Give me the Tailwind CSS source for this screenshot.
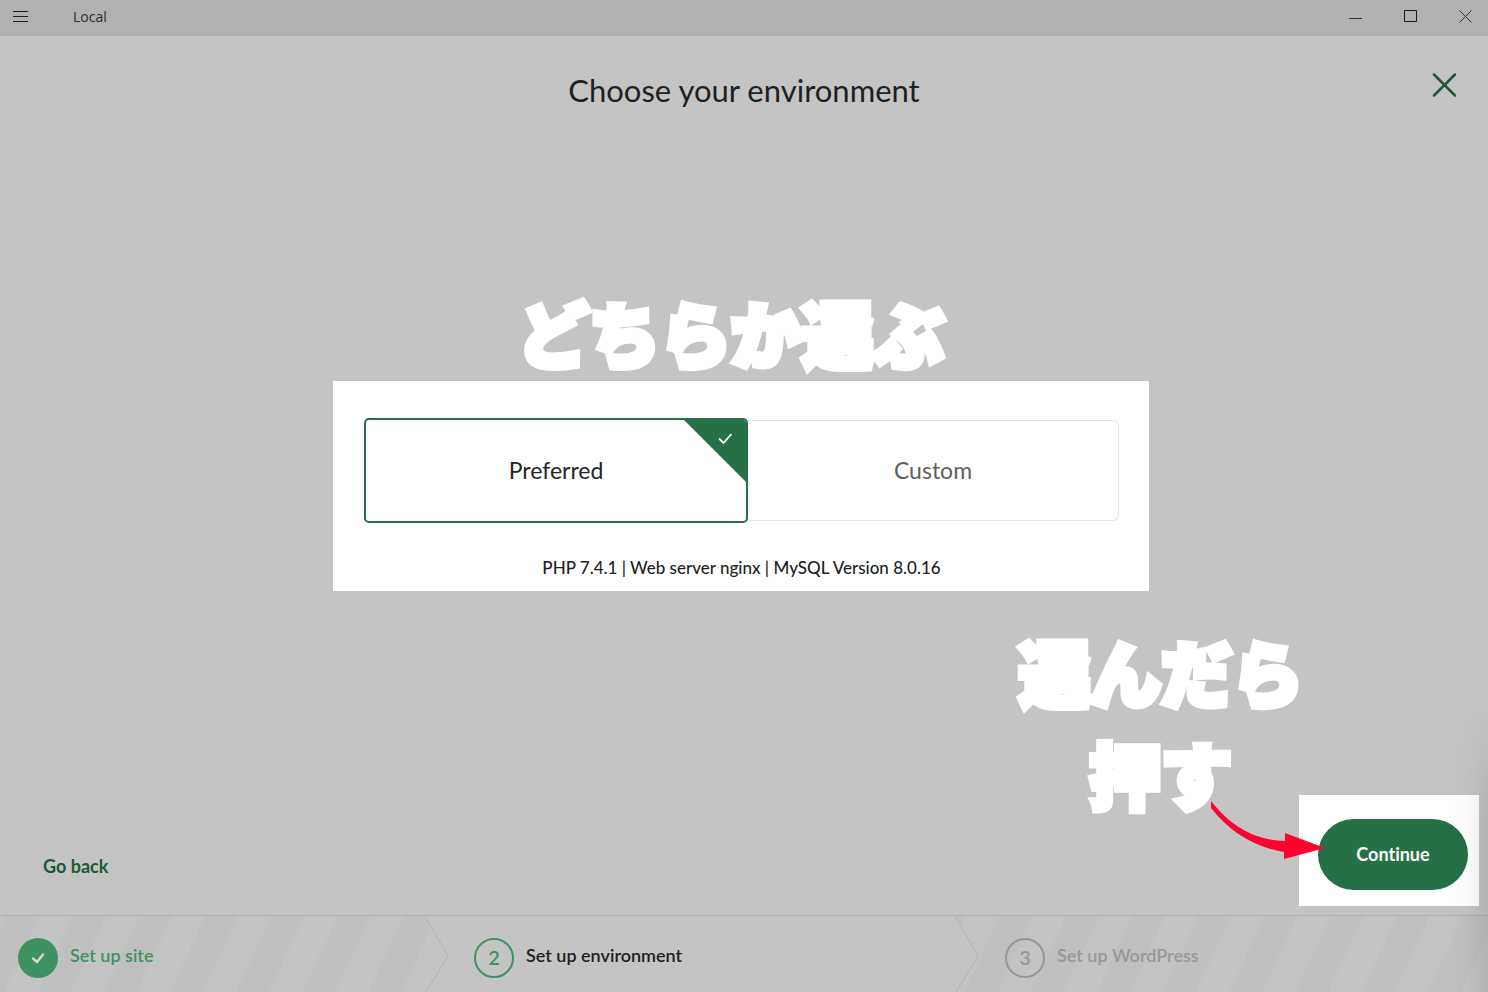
<!DOCTYPE html>
<html lang="ja">
<head>
  <meta charset="UTF-8" />
  <meta name="viewport" content="width=device-width, initial-scale=1" />
  <title>Local - Choose your environment</title>
  <script src="https://cdn.jsdelivr.net/npm/@tailwindcss/browser@4"></script>
</head>
<body class="relative min-h-screen flex flex-col bg-[#c4c4c4] text-[#1f1f1f] font-['Lato','Noto_Sans_CJK_JP',sans-serif] [font-variant-ligatures:none]">
  <!-- Title bar -->
  <header class="h-9 bg-[#b1b1b1] flex items-center justify-between pl-3 pr-[15px]">
    <div class="flex items-center gap-[45px] pb-[2px]">
      <button aria-label="Menu">
        <svg class="w-4 h-4" viewBox="0 0 16 16" fill="none" stroke="#1c1c1c" shape-rendering="crispEdges"><path d="M1 2.500h15M1 7.500h15M1 12.500h15" /></svg>
      </button>
      <span class="text-sm leading-4 text-[#2c2c2c] font-['Open_Sans',sans-serif]">Local</span>
    </div>
    <div class="flex items-center gap-10 pb-1">
      <button aria-label="Minimize">
        <svg class="w-[15px] h-[15px]" viewBox="0 0 15 15" fill="none" stroke="#333"><path d="M1 9.500h13" /></svg>
      </button>
      <button aria-label="Maximize">
        <svg class="w-[15px] h-[15px]" viewBox="0 0 15 15" fill="none" stroke="#1c1c1c"><path d="M1.500 1.500h12v11h-12z" /></svg>
      </button>
      <button aria-label="Close window">
        <svg class="w-[15px] h-[15px]" viewBox="0 0 15 15" fill="none" stroke="#333"><path d="M1.500 1.500l12 12M13.500 1.500l-12 12" /></svg>
      </button>
    </div>
  </header>

  <main class="flex-1 flex flex-col">
    <div class="grid grid-cols-[1fr_auto_1fr] items-start px-8 pt-[34px]">
      <h1 class="col-start-2 text-[31px] leading-10">Choose your environment</h1>
      <button class="justify-self-end" aria-label="Close">
        <svg class="w-6 h-7" viewBox="0 0 24 28" fill="none" stroke="#1c5a37" stroke-width="2.500" stroke-linecap="round"><path d="M2 4.500l21 21M23 4.500L2 25.500" /></svg>
      </button>
    </div>

    <!-- Environment choice -->
    <div class="mt-[179px] pr-[6px]">
      <p class="pr-5 text-center text-[71px] leading-[84px] font-black text-white font-['Noto_Sans_CJK_JP',sans-serif] [-webkit-text-stroke:7px_white]">どちらか選ぶ</p>
      <section class="w-full max-w-[816px] mx-auto mt-2 bg-white pl-[31px] pr-[30px] pt-[37px] pb-[11px] text-center">
        <form class="flex items-center">
          <label class="relative flex-1 h-[105px] flex items-center justify-center rounded-[5px] border-2 border-[#267048] overflow-hidden text-[23px] text-[#262626]">
            <input type="radio" name="environment" class="sr-only" checked />
            Preferred
            <svg class="absolute top-0 right-0 w-[62px] h-[62px]" viewBox="0 0 62 62" fill="none"><path d="M0 0h62v62z" fill="#267048" /><path d="M35 18.500l4.500 4.500 8-9" stroke="#fff" stroke-width="1.800" /></svg>
          </label>
          <label class="w-[371px] h-[101px] flex items-center justify-center rounded-r-md border border-l-0 border-[#e4e4e4] text-[23px] text-[#5f5f5f]">
            <input type="radio" name="environment" class="sr-only" />
            Custom
          </label>
        </form>
        <p class="mt-[33px] text-[17px] leading-6 font-medium">PHP 7.4.1 | Web server nginx | MySQL Version 8.0.16</p>
      </section>
    </div>

    <!-- Actions -->
    <div class="mt-auto flex items-center justify-between pl-[43px] pr-[9px] pb-[9px]">
      <a href="#" class="mt-[30px] text-lg font-bold text-[#1c5a37]">Go back</a>
      <div class="relative bg-white pl-[19px] pr-[11px] pt-6 pb-4">
        <button class="block w-[150px] h-[71px] pb-[2px] rounded-full bg-[#267048] text-lg font-bold text-white">Continue</button>
        <svg class="absolute top-0 -left-[89px] w-[120px] h-[70px]" viewBox="1210 795 120 70"><path d="M1211 801C1233 829 1257 840 1285 841L1285 833L1325 848L1284 859L1284 852C1254 847 1230 832 1211 808Z" fill="#ff0330" /></svg>
        <p class="absolute -top-44 right-44 whitespace-nowrap text-center text-[71px] leading-[102px] font-black text-white font-['Noto_Sans_CJK_JP',sans-serif] [-webkit-text-stroke:7px_white]">選んだら<br />押す</p>
      </div>
    </div>
  </main>

  <!-- Steps -->
  <footer class="h-[77px] border-t border-[#adadad] bg-[repeating-linear-gradient(115deg,#c4c4c4_0px,#c4c4c4_6px,#c0c0c0_6px,#c0c0c0_36px,#c4c4c4_36px,#c4c4c4_60px)]">
    <ol class="h-full grid grid-cols-[425fr_554fr_509fr] text-lg font-semibold">
      <li class="flex items-center gap-3 pl-[18px] pt-2 text-[#3e9160]">
        <svg class="w-10 h-10" viewBox="0 0 40 40" fill="none"><circle cx="20" cy="20" r="20" fill="#3e9160" /><path d="M15 20.500l4 3.500 6-7.500" stroke="#d0d8d3" stroke-width="2.500" stroke-linecap="round" stroke-linejoin="round" /></svg>
        <span class="pb-[6px]">Set up site</span>
      </li>
      <li class="flex">
        <svg class="w-6 h-full" viewBox="0 0 24 76" fill="none" preserveAspectRatio="none"><path d="M0 0h24v76H1l23-36z" fill="#c4c4c4" /><path d="M0 0l23 40L1 76" stroke="#b2b2b2" /></svg>
        <div class="flex-1 flex items-center gap-3 pl-[25px] pt-2 bg-[#c4c4c4]">
          <span class="w-10 h-10 pb-[2px] rounded-full border-2 border-[#3e9160] flex items-center justify-center text-xl text-[#3e9160]">2</span>
          <span class="pb-[6px]">Set up environment</span>
        </div>
        <svg class="w-6 h-full" viewBox="0 0 24 76" fill="none" preserveAspectRatio="none"><path d="M0 0l23 40L1 76H0z" fill="#c4c4c4" /><path d="M0 0l23 40L1 76" stroke="#b2b2b2" /></svg>
      </li>
      <li class="flex items-center gap-3 pl-[26px] pt-2 text-[#979797]">
        <span class="w-10 h-10 pb-[2px] rounded-full border-2 border-[#979797] flex items-center justify-center text-xl">3</span>
        <span class="pb-[6px]">Set up WordPress</span>
      </li>
    </ol>
  </footer>

  <!-- Edge shade -->
  <div class="absolute right-0 bottom-0 w-10 h-72 pointer-events-none bg-linear-to-l from-black/8 via-black/2 to-transparent mask-t-from-60%"></div>
</body>
</html>
